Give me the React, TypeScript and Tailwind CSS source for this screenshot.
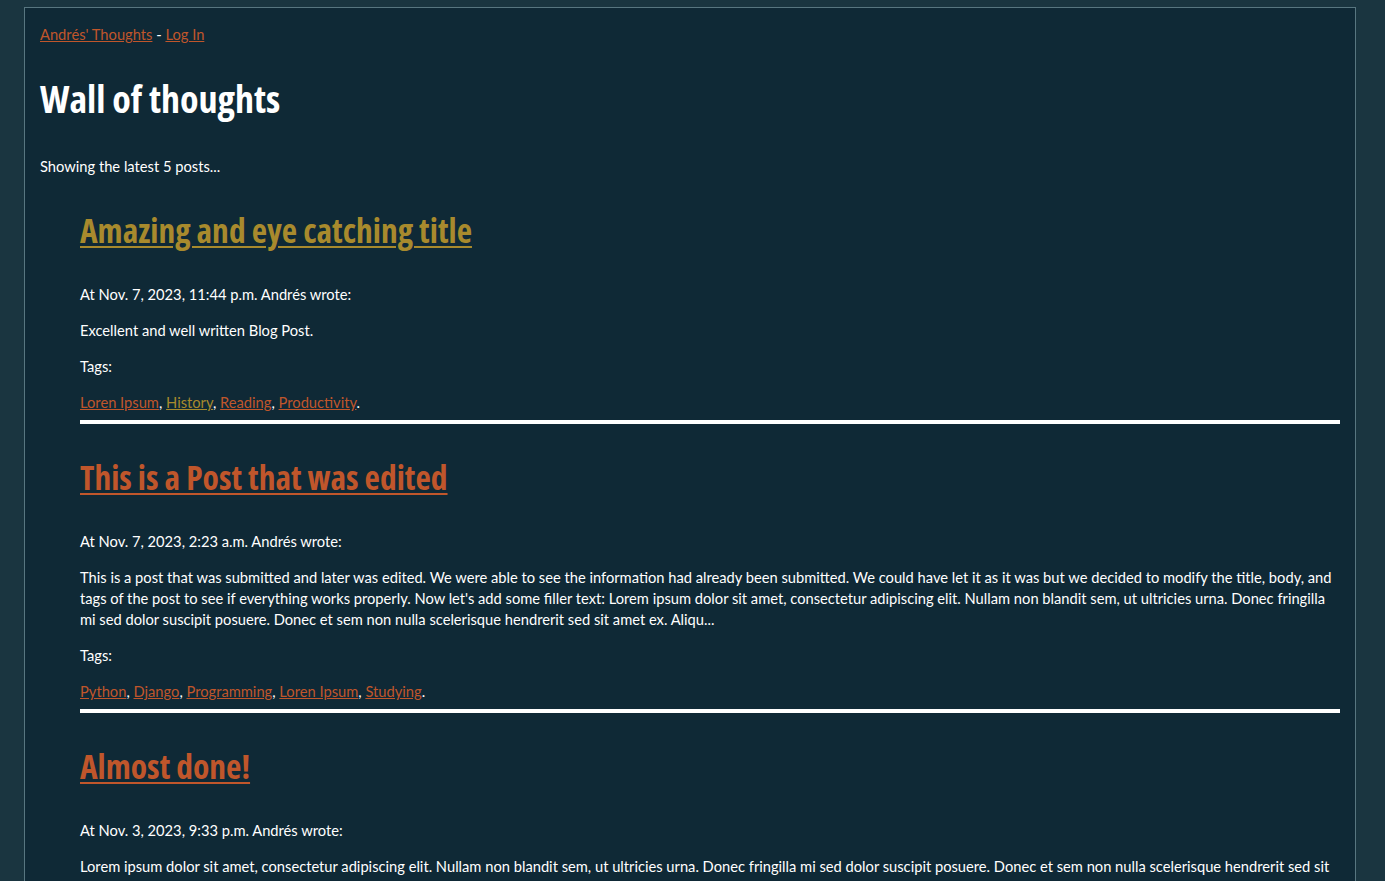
type Tag = { name: string; visited?: boolean };

type Post = {
  title: string;
  visited?: boolean;
  date: string;
  body: string;
  tags: Tag[];
};

const posts: Post[] = [
  {
    title: "Amazing and eye catching title",
    visited: true,
    date: "Nov. 7, 2023, 11:44 p.m.",
    body: "Excellent and well written Blog Post.",
    tags: [
      { name: "Loren Ipsum" },
      { name: "History", visited: true },
      { name: "Reading" },
      { name: "Productivity" },
    ],
  },
  {
    title: "This is a Post that was edited",
    date: "Nov. 7, 2023, 2:23 a.m.",
    body: "This is a post that was submitted and later was edited. We were able to see the information had already been submitted. We could have let it as it was but we decided to modify the title, body, and tags of the post to see if everything works properly. Now let's add some filler text: Lorem ipsum dolor sit amet, consectetur adipiscing elit. Nullam non blandit sem, ut ultricies urna. Donec fringilla mi sed dolor suscipit posuere. Donec et sem non nulla scelerisque hendrerit sed sit amet ex. Aliqu...",
    tags: [
      { name: "Python" },
      { name: "Django" },
      { name: "Programming" },
      { name: "Loren Ipsum" },
      { name: "Studying" },
    ],
  },
  {
    title: "Almost done!",
    date: "Nov. 3, 2023, 9:33 p.m.",
    body: "Lorem ipsum dolor sit amet, consectetur adipiscing elit. Nullam non blandit sem, ut ultricies urna. Donec fringilla mi sed dolor suscipit posuere. Donec et sem non nulla scelerisque hendrerit sed sit amet ex. Aliquam erat volutpat. Curabitur...",
    tags: [{ name: "Loren Ipsum" }, { name: "Writing" }],
  },
];

function PostItem({ post }: { post: Post }) {
  return (
    <div>
      <h2 className="mb-[33px] font-['Open_Sans',sans-serif] text-[33.5px] font-bold leading-[41px] font-stretch-condensed">
        <a
          href="#"
          className={`underline decoration-2 underline-offset-[3px] ${post.visited ? "text-[#a88a2d]" : "text-[#c0562b]"}`}
        >
          {post.title}
        </a>
      </h2>
      <p className="mb-[15px]">At {post.date} Andrés wrote:</p>
      <p className="mb-[15px]">{post.body}</p>
      <p className="mb-[15px]">Tags:</p>
      <p className="mb-[7px]">
        {post.tags.map((t, i) => (
          <span key={t.name}>
            <a
              href="#"
              className={`underline ${t.visited ? "text-[#a88a2d]" : "text-[#c0562b]"}`}
            >
              {t.name}
            </a>
            {i < post.tags.length - 1 ? ", " : "."}
          </span>
        ))}
      </p>
      <hr className="mb-[33px] h-[4px] border-0 bg-white" />
    </div>
  );
}

export default function App() {
  return (
    <div className="min-h-screen bg-[#1a3540] pt-[7px] pl-[24px] font-['Lato',sans-serif] text-[14.7px] leading-[21px] text-white">
      <div className="w-[1332px] border border-[#587680] bg-[#0f2936] pt-[16px] pr-[15px] pb-8 pl-[15px]">
        <nav>
          <a href="#" className="text-[#c0562b] underline">
            Andrés' Thoughts
          </a>{" "}
          -{" "}
          <a href="#" className="text-[#c0562b] underline">
            Log In
          </a>
        </nav>
        <h1 className="mt-[30px] font-['Open_Sans',sans-serif] text-[38px] font-bold leading-[46px] font-stretch-condensed">
          Wall of thoughts
        </h1>
        <p className="mt-[35px] mb-[33px]">Showing the latest 5 posts...</p>
        <div className="ml-[40px]">
          {posts.map((p) => (
            <PostItem key={p.title} post={p} />
          ))}
        </div>
      </div>
    </div>
  );
}
